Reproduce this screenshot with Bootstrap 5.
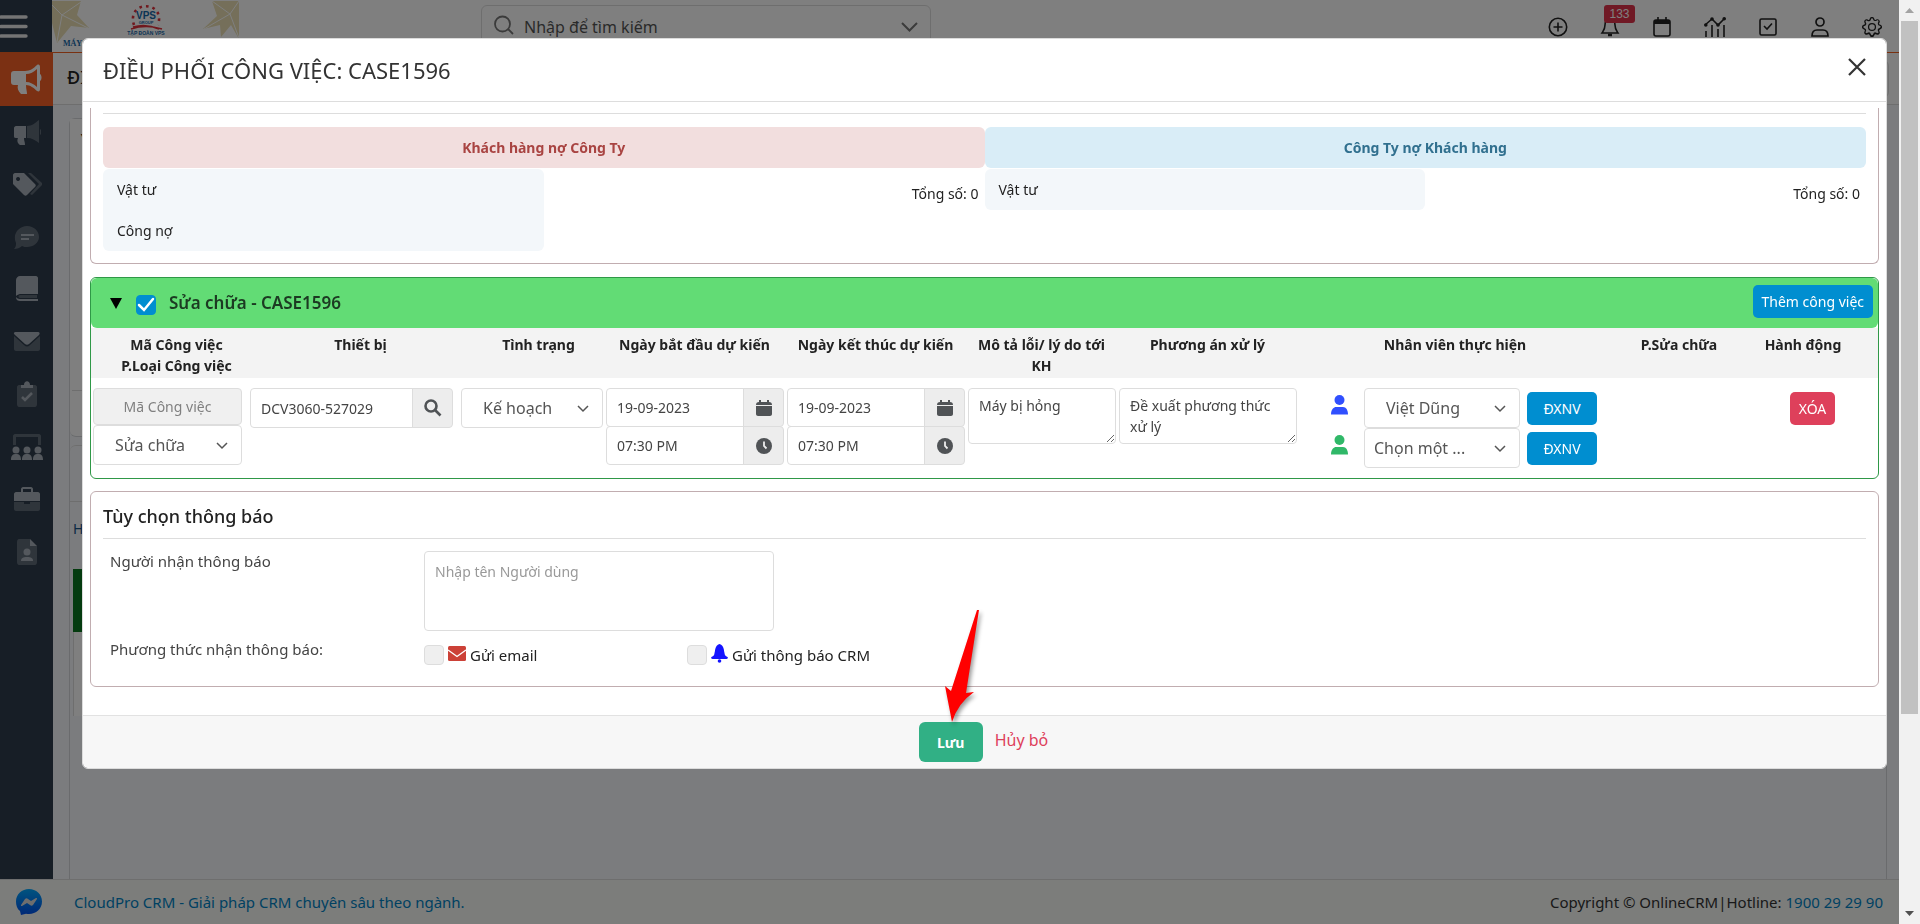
<!DOCTYPE html>
<html lang="vi">
<head>
<meta charset="utf-8">
<meta name="viewport" content="width=device-width, initial-scale=1">
<title>Điều phối công việc</title>
<link href="https://cdn.jsdelivr.net/npm/bootstrap@5.3.0/dist/css/bootstrap.min.css" rel="stylesheet">
<style>
:root { --line: #ddd; --blue: #008ed0; --bar: 21px; }
body { font-family: "Noto Sans", "Open Sans", sans-serif; font-size: 14px; line-height: 21px; color: #222; overflow: hidden; }
svg { display: block; flex: none; }

/* application shell */
.shell { height: 100vh; padding-right: var(--bar); background: #f7f9fc; }
.topbar { height: 53px; border-bottom: 1px solid #f26322; background: #fff; }
.burger { width: 52px; height: 52px; padding: 0; border: 0; background: #2e3c4c; border-radius: 0; }
.brand-logo { width: 188px; height: 52px; }
.finder { width: 450px; height: 44px; margin: 5px 0 0 241px; padding: 0 12px; border: 1px solid #ddd; border-radius: 6px; }
.finder input { border: 0; background: none; font-size: 16px; line-height: 26px; color: #444; padding: 0 10px; }
.finder input::placeholder { color: #555; }
.tools { gap: 32px; margin-right: 17px; margin-top: 1px; }
.tools a { color: #222; position: relative; }
.tools .counter { position: absolute; left: 4px; top: -12px; width: 31px; height: 18px; border-radius: 3px; background: #e0334a; color: #fff; font: 12px/18px "Liberation Sans", sans-serif; text-align: center; }
.rail { width: 53px; background: #2e3c4c; }
.rail-list { display: grid; grid-auto-rows: 1fr; height: 525px; margin: 0; padding: 0; list-style: none; }
.rail-list a { height: 100%; display: flex; align-items: center; justify-content: center; color: #a9b1ba; }
.rail-list .current a { background: #f66126; color: #fff; }
.page-title { height: 52px; background: #fff; border-bottom: 1px solid var(--line); font-size: 18px; font-weight: 500; padding: 14px 14px; overflow: hidden; white-space: nowrap; }
.ghost { width: 100px; height: 38px; border: 1px solid var(--line); border-radius: 6px; margin: -7px -4px 0 0; }
.backing { margin: 13px 12px 0 16px; border: 1px solid #d4d7da; border-bottom: 0; border-radius: 6px 6px 0 0; }
.backing .first { height: 318px; background: #fff; border-bottom: 1px solid #d4d7da; border-radius: 0 0 6px 6px; padding: 7px 8px; }
.backing .first::after { content: ""; display: block; margin: 243px -8px 0 -6px; border-top: 1px solid var(--line); }
.backing .second { margin-top: 8px; border-top: 1px solid var(--line); border-radius: 6px 6px 0 0; }
.backing .second p { margin: 55px 0 0; border-top: 1px solid var(--line); height: 68px; padding: 16px 3px; color: #16548a; }
.backing .strip { height: 63px; background: #08761f; margin-left: 3px; }
.backing .sheet { height: 84px; background: #fff; margin-left: 3px; border-left: 1px solid var(--line); }
.pagefoot { height: 45px; border-top: 1px solid #ddd; background: #f8faf7; font-size: 15px; padding: 0 16px; color: #333; }
.pagefoot a { color: #0083c4; text-decoration: none; }

/* window scroll track */
.track { position: fixed; z-index: 1100; right: 0; top: 0; bottom: 0; width: var(--bar); padding: 0 2px; background: #f1f1f1; }
.track .arrow { height: 21px; }
.track .thumb { height: 75%; background: #c1c1c1; }

/* dialog */
.modal-backdrop { right: var(--bar); width: auto; }
.modal { padding-right: var(--bar); overflow: hidden; }
.modal-dialog { max-width: none; margin: 38px 12px 0 82px; }
.modal-content { border: 1px solid #dcdcdc; border-radius: 6px; }
.modal-header { height: 63px; padding: 0 20px; border-color: var(--line); }
.modal-title { font-size: 22px; line-height: 30px; font-weight: 400; color: #333; }
.closer { border: 0; background: none; padding: 0; margin: -6px 0 0; }
.modal-body { padding: 6px 7px 28px; }
.box { border: 1px solid #c1adb0; border-radius: 6px; }
.box-debt { border-top: 0; border-radius: 0 0 6px 6px; height: 156px; padding: 5px 12px 0; margin-bottom: 13px; }
.rule { border-top: 1px solid var(--line); }
.debts { padding-top: 13px; }
.debt-head { height: 41px; line-height: 41px; border-radius: 6px; font-weight: 700; text-align: center; }
.owe { background: #f2dede; color: #a94442; }
.own { background: #d9edf7; color: #31708f; }
.debt-label { width: 50%; background: #f3f7fa; border-radius: 6px; margin-top: 1px; }
.debt-label div { height: 41px; padding: 10px 14px; }
.total { padding: 15px 6px 0; }

.box-case { border-color: #2f9847; height: 202px; margin-bottom: 12px; overflow: hidden; }
.case-head { height: 50px; background: #62dc75; border-radius: 6px; padding: 0 5px 0 19px; }
.case-head h2 { font-size: 17px; line-height: 22px; font-weight: 600; color: #1c3a22; margin: 0 0 0 13px; }
.case-head .tick { margin-top: 4px; }
.fold { border: 0; padding: 0; background: none; margin-right: 14px; }
.tick { width: 20px; height: 20px; margin: 0; border-color: var(--line); border-radius: 4px !important; background-color: #efefef; }
.tick:checked { background-color: var(--blue); border-color: var(--blue); background-size: 20px 20px; background-image: url("data:image/svg+xml,%3csvg xmlns='http://www.w3.org/2000/svg' viewBox='0 0 20 20'%3e%3cpath d='m3 10 5 5 9-11' fill='none' stroke='%23fff' stroke-width='2.500' stroke-linecap='round'/%3e%3c/svg%3e"); }
.btn-main { background: var(--blue); color: #fff; font-size: 14px; line-height: 21px; height: 33px; padding: 0 9px; border: 0; border-radius: 5px; }
.btn-main:hover { background: #007bb5; color: #fff; }
.btn-pick { width: 70px; }
.btn-cut { background: #de405b; }
.jobs { table-layout: fixed; width: 100%; }
.jobs thead { background: #f3f3f3; }
.jobs th { height: 50px; vertical-align: top; text-align: center; padding: 6px 2px 0; font-size: 14px; font-weight: 700; }
.jobs th.lead-in { padding-left: 16px; }
.jobs th:last-child { padding-right: 20px; }
.jobs td { padding: 10px 1px 0 2px; vertical-align: top; }
.jobs td.roomy { padding-right: 6px; }
.jobs .form-control, .jobs .form-select { font-size: 14px; line-height: 21px; color: #444; border-color: var(--line); border-radius: 4px; padding: 7px 10px; height: 40px; }
.jobs .form-select { font-size: 16px; color: #555; padding: 7px 28px 7px 21px; background: #fff url("data:image/svg+xml,%3csvg xmlns='http://www.w3.org/2000/svg' viewBox='0 0 12 12'%3e%3cpath d='m1 4 5 5 5-5' fill='none' stroke='%23555' stroke-width='1.500'/%3e%3c/svg%3e") no-repeat right 13px center / 12px 12px; }
.jobs .form-select.tight { padding-left: 9px; padding-right: 28px; }
.jobs .code { height: 37px; text-align: center; background: #f0f0f0; }
.jobs .code::placeholder { color: #808080; }
.jobs textarea.form-control { height: 56px; line-height: 21px; padding: 6px 10px; overflow: hidden; }
.addon { width: 41px; padding: 0; justify-content: center; background: #ededed; border: 1px solid var(--line); border-radius: 4px; color: #505356; display: flex; align-items: center; }
.jobs .stack .form-control { height: 39px; }
.jobs .stack + .stack { margin-top: -1px; }
.person { gap: 7px; }
.person .form-select { width: 156px; }
.person svg { margin: 0 9px 6px 31px; }

.box-notice { height: 196px; padding: 13px 12px 0; }
.box-notice h2 { font-size: 18px; line-height: 22px; font-weight: 500; margin: 0 0 11px; color: #222; }
.names { width: 313px; padding: 8px 7px; color: #444; font-size: 15px; }
.to { width: 350px; height: 80px; border-color: var(--line); border-radius: 4px; padding: 9px 10px; font-size: 14px; line-height: 21px; resize: none; }
.to::placeholder { color: #999; }
.way { width: 263px; font-size: 15px; height: 24px; }
.modal-footer { height: 53px; padding: 0; background: #f7f7f7; border-color: #e2e2e2; flex-wrap: nowrap; }
.modal-footer > * { margin: 0; }
.save { width: 64px; height: 40px; background: #31b085; color: #fff; font-weight: 700; font-size: 14px; border: 0; border-radius: 6px; }
.cancel { color: #de405b; font-size: 16px; text-decoration: none; margin: 0 2px 4px 12px; }
.save-wrap { position: relative; }
.pointer { position: absolute; left: 25px; top: -112px; pointer-events: none; filter: drop-shadow(2px 3px 2px rgba(0,0,0,.4)); }
</style>
</head>
<body>
<div class="shell d-flex flex-column">
  <header class="topbar d-flex align-items-start flex-shrink-0">
    <button class="burger btn" aria-label="Menu"><svg width="28" height="28" viewBox="0 0 28 28" stroke="#e8e8e8" stroke-width="3.4" stroke-linecap="round"><path d="M1 5H26M1 14.500H26M1 24H26"/></svg></button>
    <svg class="brand-logo" viewBox="0 0 188 52">
      <g fill="#eadfb4"><path d="M0 1h29l-4 14 12 13-18-2-14 17-5-20zM160 1h27v38l-8-14-10 12-1-12-17 4 14-13z"/></g>
      <g stroke="#fff" stroke-width="1"><path d="M10 15 29 2M10 15 36 28M10 15 5 42M10 15 0 5M178 14 160 1M178 14 152 29M178 14 187 1M178 14 187 38"/></g>
      <path d="M82 25C74 0 114 0 106 25" fill="none" stroke="#e0303a" stroke-width="2.600" stroke-dasharray="2.600 4"/>
      <path d="M81 27q13-4 26 2M79 29q15-5 31 0" fill="none" stroke="#e0303a" stroke-width="1.500"/>
      <g font-family="Liberation Sans" font-weight="700" text-anchor="middle" fill="#1568a8"><text x="94" y="19" font-size="10">VPS</text><text x="94" y="24" font-size="4">GROUP</text><text x="94" y="35" font-size="5">TẬP ĐOÀN VPS</text></g>
      <text x="11" y="46" font-family="Liberation Serif" font-weight="700" font-size="8" fill="#1568a8">MÁY</text>
    </svg>
    <div class="finder d-flex align-items-start">
      <svg class="mt-2" width="20" height="22" viewBox="0 0 20 22" fill="none" stroke="#777" stroke-width="1.800"><circle cx="8.500" cy="10" r="7.500"/><path d="m14 15 5 5"/></svg>
      <input class="flex-fill mt-2" type="search" aria-label="Tìm kiếm" placeholder="Nhập để tìm kiếm">
      <svg class="mt-3" width="17" height="10" viewBox="0 0 17 10" fill="none" stroke="#777" stroke-width="2"><path d="m1 1 7.500 7.500L16 1"/></svg>
    </div>
    <nav class="tools d-flex ms-auto pt-3" aria-label="Công cụ">
      <a href="#" aria-label="Thêm"><svg width="20" height="20" viewBox="0 0 20 20" fill="none" stroke="currentColor" stroke-width="1.600"><circle cx="10" cy="10" r="8.700"/><path d="M10 5.500v9M5.500 10h9"/></svg></a>
      <a href="#" aria-label="Thông báo"><svg width="20" height="20" viewBox="0 0 20 20" fill="none" stroke="currentColor" stroke-width="1.600"><path d="M10 2C6 2 5 5 5 8c0 4-1 5-3 8h16c-2-3-3-4-3-8 0-3-1-6-5-6z"/><path d="M8 18h4" stroke-width="2.500"/></svg><span class="counter">133</span></a>
      <a href="#" aria-label="Lịch"><svg width="20" height="20" viewBox="0 0 20 20" fill="none" stroke="currentColor" stroke-width="1.600"><rect x="2" y="3" width="16" height="16" rx="2"/><path d="M2 5h16" stroke-width="4"/><path d="M6 0v4M14 0v4"/></svg></a>
      <a href="#" aria-label="Báo cáo"><svg width="22" height="20" viewBox="0 0 22 20" fill="none" stroke="currentColor" stroke-width="1.600"><path d="m1 8 7-6 6 6 7-7M2 14v6M8 8v12M14 12v8M20 8v12"/><g fill="currentColor" stroke="none"><circle cx="1.800" cy="8" r="1.800"/><circle cx="8" cy="2" r="1.800"/><circle cx="14" cy="8" r="1.800"/><circle cx="20.200" cy="1.800" r="1.800"/></g></svg></a>
      <a href="#" aria-label="Công việc"><svg width="20" height="20" viewBox="0 0 20 20" fill="none" stroke="currentColor" stroke-width="1.600"><rect x="2" y="2" width="16" height="16" rx="1.500"/><path d="m6 9 3 3 5-5.500"/></svg></a>
      <a href="#" aria-label="Tài khoản"><svg width="20" height="20" viewBox="0 0 20 20" fill="none" stroke="currentColor" stroke-width="1.700"><circle cx="10" cy="5" r="4"/><path d="M2 19c0-4 2-6 5-6h6c3 0 5 2 5 6z"/></svg></a>
      <a href="#" aria-label="Cài đặt"><svg width="20" height="20" viewBox="0 0 16 16" fill="currentColor"><path d="M8 4.750a3.250 3.250 0 1 0 0 6.500 3.250 3.250 0 0 0 0-6.500M5.750 8a2.250 2.250 0 1 1 4.500 0 2.250 2.250 0 0 1-4.500 0"/><path d="M9.800 1.300c-.5-1.800-3.100-1.800-3.600 0l-.1.300a.9.900 0 0 1-1.300.6l-.3-.2c-1.600-.9-3.400.9-2.500 2.500l.2.300c.2.500 0 1.100-.6 1.300l-.3.100c-1.800.5-1.800 3.100 0 3.600l.3.100c.6.200.8.800.6 1.300l-.2.300c-.9 1.600.9 3.400 2.500 2.500l.3-.2c.5-.2 1.100 0 1.300.6l.1.300c.5 1.800 3.100 1.800 3.600 0l.1-.3c.2-.6.800-.8 1.300-.6l.3.200c1.600.9 3.400-.9 2.500-2.500l-.2-.3c-.2-.5 0-1.100.6-1.300l.3-.1c1.800-.5 1.800-3.100 0-3.600l-.3-.1a.9.900 0 0 1-.6-1.300l.2-.3c.9-1.600-.9-3.400-2.500-2.500l-.3.200a.9.900 0 0 1-1.300-.6zm-2.600.3c.2-.8 1.400-.8 1.600 0l.1.300c.4 1.100 1.700 1.600 2.700 1.100l.3-.2c.8-.4 1.600.4 1.100 1.100l-.1.300c-.6 1.100 0 2.400 1.100 2.700l.3.100c.8.200.8 1.400 0 1.600l-.3.100a1.900 1.900 0 0 0-1.100 2.700l.1.300c.5.700-.3 1.500-1.100 1.100l-.3-.2a1.900 1.900 0 0 0-2.700 1.100l-.1.300c-.2.800-1.400.8-1.600 0l-.1-.3a1.900 1.900 0 0 0-2.700-1.100l-.3.200c-.8.400-1.600-.4-1.100-1.100l.1-.3A1.900 1.900 0 0 0 2 8.900l-.3-.1c-.8-.2-.8-1.400 0-1.600L2 7.100a1.900 1.900 0 0 0 1.100-2.700L3 4.100C2.500 3.400 3.300 2.600 4.100 3l.3.200c1 .5 2.300 0 2.700-1.100z"/></svg></a>
    </nav>
  </header>
  <div class="d-flex flex-fill overflow-hidden">
    <nav class="rail flex-shrink-0" aria-label="Phân hệ">
      <ul class="rail-list">
        <li class="current"><a href="#" aria-label="Tiếp thị"><svg width="32" height="32" viewBox="0 0 32 32" fill="currentColor"><path d="M3 8h11c5 0 9-3 12-6 2-1 3 0 3 2v7c2 1 2 6 0 7v8c0 2-1 3-3 2-3-3-7-6-11-6 0 4 1 6 1 9h-6c-3-3-4-6-3-9H3c-2 0-3-1-3-3v-8c0-2 1-3 3-3z"/><path d="M15 11v8c4 0 8 2 11 5V6c-3 3-7 5-11 5z" fill="#f66126"/></svg></a></li>
        <li><a href="#" aria-label="Chiến dịch"><svg width="28" height="28" viewBox="0 0 28 28" fill="currentColor"><path d="M3 8h10v12h-2c0 3 1 4 1 7H7c-3-2-3-5-2-7H3c-2 0-2-1-2-2v-8c0-1 1-2 2-2z"/><path d="M14 8c5 0 8-3 12-6v23c-4-3-7-5-12-5zM27 11c2 1 2 5 0 6z" opacity=".4"/></svg></a></li>
        <li><a href="#" aria-label="Thẻ"><svg width="30" height="26" viewBox="0 0 30 26" fill="currentColor"><path fill-rule="evenodd" d="M3 2h9l11 11c1 1 1 2 0 3l-8 8c-1 1-2 1-3 0L1 13V4c0-1 1-2 2-2zm3 4a2 2 0 1 0 .1 0z"/><path d="m16 2 11 11-9 10 2 1 10-10v-2L19 2z" opacity=".4"/></svg></a></li>
        <li><a href="#" aria-label="Trao đổi"><svg width="28" height="26" viewBox="0 0 28 26"><path fill="currentColor" opacity=".4" d="M14 2c7 0 12 5 12 11s-6 10-12 10c-2 0-3 0-5-1-2 2-5 3-8 3 2-2 2-4 2-6C-1 10 6 2 14 2z"/><path d="M8 11h13M8 15h8" stroke="#a9b1ba" stroke-width="2"/></svg></a></li>
        <li><a href="#" aria-label="Sổ"><svg width="24" height="28" viewBox="0 0 24 28" fill="currentColor"><path d="M5 1h16c1 0 2 1 2 2v16H5c-1 0-3 1-4 2V5c0-2 2-4 4-4z"/><path d="M5 20h17v3H5c-2 0-2-3 0-3z" opacity=".4"/><path d="M1 22c0 3 2 4 4 4h18v-2H5c-2 0-3-1-4-2z"/></svg></a></li>
        <li><a href="#" aria-label="Thư"><svg width="28" height="22" viewBox="0 0 28 22" fill="currentColor"><path d="M3 1h22c2 0 2 2 1 3L16 13c-1 1-3 1-4 0L2 4C0 2 1 1 3 1z"/><path d="m1 5 10 9c2 2 4 2 6 0l10-9v13c0 1-1 2-2 2H3c-1 0-2-1-2-2z" opacity=".4"/></svg></a></li>
        <li><a href="#" aria-label="Việc"><svg width="22" height="28" viewBox="0 0 22 28" fill="currentColor"><path d="M3 5h16c1 0 2 1 2 2v17c0 2-1 3-2 3H3c-1 0-2-1-2-3V7c0-1 1-2 2-2z" opacity=".4"/><path d="M5 5h3c0-5 6-5 6 0h3v3H5z"/><path d="m6 17 3 3 7-7" fill="none" stroke="currentColor" stroke-width="2.500"/></svg></a></li>
        <li><a href="#" aria-label="Nhóm"><svg width="32" height="28" viewBox="0 0 32 28" fill="currentColor"><path d="M2 12V3c0-1 1-2 2-2h24c1 0 2 1 2 2v9h-3V4H5v8z" opacity=".4"/><circle cx="5" cy="17" r="3.500"/><circle cx="16" cy="17" r="3.500"/><circle cx="27" cy="17" r="3.500"/><path d="M0 27c0-5 2-6 5-6s5 1 5 6zM11 27c0-5 2-6 5-6s5 1 5 6zM22 27c0-5 2-6 5-6s5 1 5 6z"/></svg></a></li>
        <li><a href="#" aria-label="Hồ sơ"><svg width="28" height="26" viewBox="0 0 28 26" fill="currentColor"><path fill-rule="evenodd" d="M3 6h5V3c0-1 1-2 2-2h8c1 0 2 1 2 2v3h5c1 0 2 1 2 2v7H1V8c0-1 1-2 2-2zm7 0h8V3h-8z"/><path d="M1 16h10v2h6v-2h10v7c0 1-1 2-2 2H3c-1 0-2-1-2-2z" opacity=".4"/></svg></a></li>
        <li><a href="#" aria-label="Nhân sự"><svg width="22" height="28" viewBox="0 0 22 28" fill="currentColor"><path d="M3 1h11v7h7v16c0 2-1 3-2 3H3c-1 0-2-1-2-3V4c0-2 1-3 2-3z" opacity=".4"/><path d="m14 1 7 7h-7z"/><circle cx="11" cy="14" r="3.500"/><path d="M5 23c0-3 2-4 6-4s6 1 6 4z"/></svg></a></li>
      </ul>
    </nav>
    <main class="flex-fill d-flex flex-column">
      <div class="page-title d-flex justify-content-between"><span>ĐI</span><span class="ghost"></span></div>
      <div class="backing flex-fill">
        <div class="first">▼</div>
        <div class="second"><p>H</p><div class="strip"></div><div class="sheet"></div></div>
      </div>
    </main>
  </div>
  <footer class="pagefoot d-flex align-items-center flex-shrink-0">
    <a href="#" class="me-auto d-flex align-items-center"><svg class="me-4" width="26" height="26" viewBox="0 0 26 26"><defs><linearGradient id="msg" x2="0" y2="1"><stop stop-color="#00a8ff"/><stop offset="1" stop-color="#0050ee"/></linearGradient></defs><path fill="url(#msg)" d="M13 0c7 0 13 5 13 12.500S20 25 13 25c-1 0-2 0-3-.3L5 26l-1-4C1 20 0 16 0 12.500 0 5 6 0 13 0z"/><path fill="#ddd" d="m5 16 4-6c1-1 2-1 3 0l3 2 5-3c1 0 1 0 1 1l-4 6c-1 1-2 1-3 0l-3-2-5 3c-1 0-1 0-1-1z"/></svg><span class="ps-2">CloudPro CRM - Giải pháp CRM chuyên sâu theo ngành.</span></a>
    <span>Copyright © OnlineCRM|Hotline: <a href="#">1900 29 29 90</a></span>
  </footer>
</div>

<div class="modal-backdrop show"></div>
<div class="modal d-block" tabindex="-1" role="dialog" aria-labelledby="dlgTitle">
  <div class="modal-dialog">
    <div class="modal-content">
      <div class="modal-header">
        <h1 class="modal-title" id="dlgTitle">ĐIỀU PHỐI CÔNG VIỆC: CASE1596</h1>
        <button class="closer" aria-label="Đóng"><svg width="18" height="18" viewBox="0 0 18 18" stroke="#333" stroke-width="2.200"><path d="m1 1 16 16M17 1 1 17"/></svg></button>
      </div>
      <div class="modal-body">
        <section class="box box-debt">
          <div class="rule"></div>
          <div class="d-flex debts">
            <div class="w-50">
              <div class="debt-head owe">Khách hàng nợ Công Ty</div>
              <div class="d-flex justify-content-between"><div class="debt-label"><div>Vật tư</div><div>Công nợ</div></div><div class="total">Tổng số: 0</div></div>
            </div>
            <div class="w-50">
              <div class="debt-head own">Công Ty nợ Khách hàng</div>
              <div class="d-flex justify-content-between align-items-start"><div class="debt-label"><div>Vật tư</div></div><div class="total">Tổng số: 0</div></div>
            </div>
          </div>
        </section>

        <section class="box box-case">
          <div class="case-head d-flex align-items-center">
            <button class="fold" aria-label="Thu gọn"><svg width="12" height="11" viewBox="0 0 12 11"><path d="M0 0h12L6 11z"/></svg></button>
            <input class="form-check-input tick" type="checkbox" id="caseOn" checked>
            <h2><label for="caseOn">Sửa chữa - CASE1596</label></h2>
            <button class="btn btn-main ms-auto mb-1">Thêm công việc</button>
          </div>
          <table class="jobs">
            <colgroup><col style="width:157px"><col style="width:211px"><col style="width:145px"><col style="width:181px"><col style="width:181px"><col style="width:151px"><col style="width:181px"><col style="width:314px"><col style="width:134px"><col style="width:132px"></colgroup>
            <thead><tr>
              <th class="lead-in">Mã Công việc<br>P.Loại Công việc</th><th class="lead-in">Thiết bị</th><th class="lead-in">Tình trạng</th><th>Ngày bắt đầu dự kiến</th><th>Ngày kết thúc dự kiến</th><th>Mô tả lỗi/ lý do tới KH</th><th>Phương án xử lý</th><th>Nhân viên thực hiện</th><th>P.Sửa chữa</th><th>Hành động</th>
            </tr></thead>
            <tbody><tr>
              <td class="roomy"><input class="form-control code" placeholder="Mã Công việc" aria-label="Mã Công việc" disabled><select class="form-select" aria-label="Loại công việc"><option>Sửa chữa</option></select></td>
              <td class="roomy"><div class="input-group"><input class="form-control" value="DCV3060-527029" aria-label="Thiết bị"><button class="addon" aria-label="Tìm"><svg width="18" height="18" viewBox="0 0 18 18" fill="none" stroke="currentColor" stroke-width="2.600"><circle cx="7" cy="7" r="5.500"/><path d="m11 11 5.500 5.500"/></svg></button></div></td>
              <td><select class="form-select" aria-label="Tình trạng"><option>Kế hoạch</option></select></td>
              <td><div class="input-group stack"><input class="form-control" value="19-09-2023" aria-label="Ngày bắt đầu"><button class="addon" aria-label="Chọn ngày"><svg width="16" height="18" viewBox="0 0 16 18" fill="currentColor"><path d="M3 1h2v2h6V1h2v2c2 0 3 1 3 3H0c0-2 1-3 3-3zM0 7h16v8c0 1-1 2-2 2H2c-1 0-2-1-2-2z"/></svg></button></div><div class="input-group stack"><input class="form-control" value="07:30 PM" aria-label="Giờ bắt đầu"><button class="addon" aria-label="Chọn giờ"><svg width="16" height="16" viewBox="0 0 16 16"><circle cx="8" cy="8" r="8" fill="currentColor"/><path d="M8 3.500V8l2.500 2.500" fill="none" stroke="#eee" stroke-width="1.800"/></svg></button></div></td>
              <td><div class="input-group stack"><input class="form-control" value="19-09-2023" aria-label="Ngày kết thúc"><button class="addon" aria-label="Chọn ngày"><svg width="16" height="18" viewBox="0 0 16 18" fill="currentColor"><path d="M3 1h2v2h6V1h2v2c2 0 3 1 3 3H0c0-2 1-3 3-3zM0 7h16v8c0 1-1 2-2 2H2c-1 0-2-1-2-2z"/></svg></button></div><div class="input-group stack"><input class="form-control" value="07:30 PM" aria-label="Giờ kết thúc"><button class="addon" aria-label="Chọn giờ"><svg width="16" height="16" viewBox="0 0 16 16"><circle cx="8" cy="8" r="8" fill="currentColor"/><path d="M8 3.500V8l2.500 2.500" fill="none" stroke="#eee" stroke-width="1.800"/></svg></button></div></td>
              <td><textarea class="form-control" aria-label="Mô tả lỗi">Máy bị hỏng</textarea></td>
              <td><textarea class="form-control" aria-label="Phương án xử lý">Đề xuất phương thức xử lý</textarea></td>
              <td>
                <div class="person d-flex align-items-center"><svg width="17" height="20" viewBox="0 0 17 20" fill="#304ffe"><circle cx="8.500" cy="5" r="5"/><path d="M0 19.500C0 14 3 12 5 12h7c3 0 5 3 5 7.500z"/></svg><select class="form-select" aria-label="Nhân viên chính"><option>Việt Dũng</option></select><button class="btn btn-main btn-pick">ĐXNV</button></div>
                <div class="person d-flex align-items-center"><svg width="17" height="20" viewBox="0 0 17 20" fill="#30b868"><circle cx="8.500" cy="5" r="5"/><path d="M0 19.500C0 14 3 12 5 12h7c3 0 5 3 5 7.500z"/></svg><select class="form-select tight" aria-label="Nhân viên phụ"><option>Chọn một ...</option></select><button class="btn btn-main btn-pick">ĐXNV</button></div>
              </td>
              <td></td>
              <td><div class="text-center pt-1"><button class="btn btn-main btn-cut">XÓA</button></div></td>
            </tr></tbody>
          </table>
        </section>

        <section class="box box-notice">
          <h2>Tùy chọn thông báo</h2>
          <div class="rule"></div>
          <div class="d-flex pt-1"><label class="names" for="receivers">Người nhận thông báo</label><div class="ps-2 pt-2"><textarea class="form-control to" id="receivers" placeholder="Nhập tên Người dùng"></textarea></div></div>
          <div class="d-flex"><div class="names">Phương thức nhận thông báo:</div><div class="ps-2 pt-2 mt-1 d-flex">
            <div class="way d-flex align-items-center"><input class="form-check-input tick" type="checkbox" id="byMail"><label class="d-flex align-items-center ms-1" for="byMail"><svg class="me-1 mb-1" width="18" height="15" viewBox="0 0 18 15"><rect width="18" height="15" rx="1.500" fill="#cc4137"/><path d="m0 4 9 6.500L18 4" fill="none" stroke="#fff" stroke-width="1.400"/></svg>Gửi email</label></div>
            <div class="way d-flex align-items-center"><input class="form-check-input tick" type="checkbox" id="byCrm"><label class="d-flex align-items-center ms-1" for="byCrm"><svg class="me-1 mb-1" width="17" height="19" viewBox="0 0 17 19" fill="#1414ff"><path d="M8.500 0c5 2 4 6 5 9 0 2 1 3 3 4 1 1 0 2-1 2H1.500c-1 0-2-1-1-2 2-1 3-2 3-4 1-3 0-7 5-9z"/><circle cx="8.500" cy="17" r="1.800"/></svg>Gửi thông báo CRM</label></div>
          </div></div>
        </section>
      </div>
      <div class="modal-footer justify-content-center">
        <div class="save-wrap"><button class="save">Lưu</button>
          <svg class="pointer" width="40" height="114" viewBox="0 0 40 114"><path fill="#f00" d="M35 0 22 83 30 82Q14 93 8 112L1 76 7 81 33 0Z"/></svg></div>
        <a class="cancel" href="#">Hủy bỏ</a>
      </div>
    </div>
  </div>
</div>
<div class="track" aria-hidden="true">
  <div class="arrow d-flex align-items-center justify-content-center"><svg width="9" height="5" viewBox="0 0 9 5" fill="#a3a3a3"><path d="M0 5h9L4.500 0z"/></svg></div>
  <div class="thumb"></div>
  <div class="arrow position-absolute bottom-0 start-0 end-0 d-flex align-items-center justify-content-center"><svg width="9" height="5" viewBox="0 0 9 5" fill="#505050"><path d="M0 0h9L4.500 5z"/></svg></div>
</div>
<script src="https://cdn.jsdelivr.net/npm/bootstrap@5.3.0/dist/js/bootstrap.bundle.min.js"></script>
</body>
</html>
